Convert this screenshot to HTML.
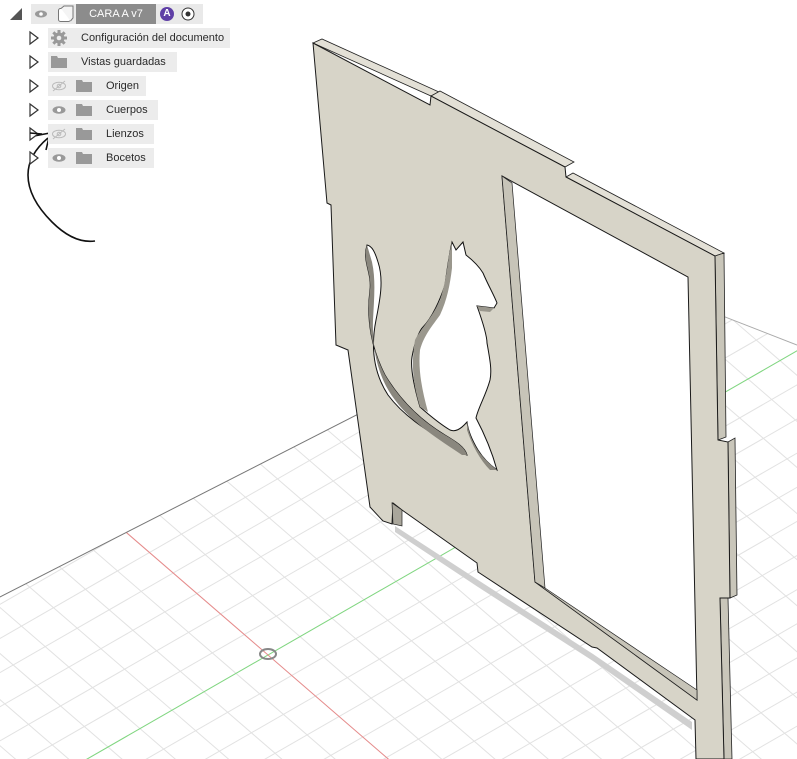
<!DOCTYPE html>
<html><head><meta charset="utf-8"><style>
html,body{margin:0;padding:0;width:797px;height:759px;overflow:hidden;background:#fff;font-family:"Liberation Sans",sans-serif}
svg{position:absolute;left:0;top:0}
.bg{position:absolute;background:#ececec;height:20px}
.t{position:absolute;font-size:11px;color:#2a2a2a;line-height:20px;white-space:nowrap}
</style></head><body>
<svg width="797" height="759" viewBox="0 0 797 759"><defs><clipPath id="cp"><polygon points="-10,602 625,278 797,345 797,759 -10,759"/></clipPath></defs><g id="g" clip-path="url(#cp)"></g>
<line x1="-10" y1="602" x2="625" y2="278" stroke="#777"/><line x1="625" y1="278" x2="797" y2="345" stroke="#aaa"/></svg>
<svg width="797" height="759" viewBox="0 0 797 759">
<!-- shadow -->
<polygon points="395,526 478,580 593,654 692,722 692,730 593,661 478,587 395,532" fill="#cfcfcf"/>
<!-- top thickness -->
<polygon points="313,43 322,39 439,92 431,96" fill="#e3e0d6" stroke="#222" stroke-width="0.8"/>
<polygon points="431,96 440,91 574,162 565,167" fill="#e3e0d6" stroke="#222" stroke-width="0.8"/>
<polygon points="566,177 573,173 724,253 715,256" fill="#e3e0d6" stroke="#222" stroke-width="0.8"/>
<!-- right thickness -->
<polygon points="715,256 724,253 726,437 718,440" fill="#c9c6ba" stroke="#222" stroke-width="0.8"/>
<polygon points="728,442 735,438 737,595 730,598" fill="#c9c6ba" stroke="#222" stroke-width="0.8"/>
<polygon points="720,598 728,598 732,759 724,759" fill="#c9c6ba" stroke="#222" stroke-width="0.8"/>
<!-- front face -->
<polygon points="313,43 430,105 431,96 565,167 566,177 715,256 718,440 728,442 730,598 720,598 724,759 696,759 695,720 597,648 592,647 478,572 477,563 402,510 393,503 392,524 383,521 370,507 348,350 336,345 331,205 327,203" fill="#d7d4c8" stroke="#1a1a1a" stroke-width="1"/>
<polygon points="392,503 402,510 402,526 393,524" fill="#a9a69b" stroke="#222" stroke-width="0.7"/>
<!-- window -->
<polygon points="502,176 688,277 697,700 535,582" fill="#fff" stroke="#1a1a1a" stroke-width="1"/>
<polygon points="502,176 512,183 545,588 535,582" fill="#c7c4b8" stroke="#222" stroke-width="0.7"/>
<polygon points="535,582 545,588 697,690 697,700" fill="#c7c4b8" stroke="#222" stroke-width="0.7"/>
<!-- cat tail -->
<path d="M367,245 C362,262 372,272 370,290 C366,320 372,350 385,375 C400,400 420,420 445,435 C455,441 465,447 467,455 C460,453 452,446 448,443 C430,432 405,418 388,395 C375,375 370,350 376,320 C380,300 384,280 378,262 C375,252 372,246 367,245 Z" fill="#fff" stroke="#111" stroke-width="1"/>
<path d="M367,245 C362,262 372,272 370,290 C366,320 372,350 385,375 C400,400 420,420 445,435 C455,441 465,447 467,455 L462,455 C440,440 412,423 395,400 C378,378 372,350 373,320 C374,300 376,280 372,262 Z" fill="#8a877e"/>
<!-- cat body -->
<path d="M452,242 L456,250 L463,242 L466,255 C475,262 480,268 483,273 C488,285 494,295 497,303 L494,308 L477,306 C482,320 487,335 487,343 C490,360 492,370 490,380 C486,395 478,408 476,418 C485,435 492,452 497,470 C490,465 483,458 478,450 C472,440 468,430 467,422 C460,430 455,432 450,430 C440,424 428,414 420,407 C415,390 410,370 412,357 C415,340 420,330 423,327 C432,318 440,300 445,285 C447,270 449,255 452,242 Z" fill="#fff" stroke="#111" stroke-width="1"/>
<path d="M452,242 L449,255 C447,270 445,285 440,300 C432,318 420,330 415,340 C410,370 415,390 420,407 L428,412 C422,390 418,370 420,350 C424,335 433,325 440,315 C447,300 450,285 452,268 Z" fill="#9a978d"/>
<path d="M467,422 C470,440 478,455 497,470 L490,470 C480,460 472,445 467,430 Z" fill="#8a877e"/>
<path d="M477,306 L494,308 L490,312 L480,311 Z" fill="#9a978d"/>
<!-- hand-drawn arrow -->
<path d="M95,241 C80,243 65,235 52,222 C38,208 28,192 28,175 C28,160 36,148 48,138" fill="none" stroke="#111" stroke-width="1.6"/>
<path d="M34,136 L50,133 L46,150" fill="none" stroke="#111" stroke-width="1.6"/>
<!-- origin -->
<ellipse cx="268" cy="654" rx="8" ry="5" fill="none" stroke="#888" stroke-width="2"/>
</svg>

<div class="bg" style="left:31px;top:4px;width:172px;background:#e9e9e9"></div>
<svg style="left:8px;top:7px" width="16" height="14"><polygon points="14,1 14,13 2,13" fill="#555"/></svg>
<svg style="left:34px;top:9px" width="14" height="10"><ellipse cx="7" cy="5" rx="6" ry="3.5" fill="#9a9a9a"/><circle cx="7" cy="5" r="1.8" fill="#fff"/></svg>
<svg style="left:57px;top:5px" width="18" height="18"><rect x="1.5" y="3.5" width="12" height="13" rx="2" fill="#fff" stroke="#777"/><path d="M4,3.5 L7,1 L16,1 L16,13 L13.5,16" fill="#f4f4f4" stroke="#777"/></svg>
<div style="position:absolute;left:76px;top:4px;width:80px;height:20px;background:#8c8c8c;color:#fff;font-size:11px;line-height:20px;text-align:center">CARA A v7</div>
<div style="position:absolute;left:160px;top:7px;width:14px;height:14px;border-radius:50%;background:#5f3fa6;color:#fff;font-size:10px;line-height:14px;text-align:center;font-weight:bold">A</div>
<svg style="left:181px;top:7px" width="14" height="14"><circle cx="7" cy="7" r="6" fill="#fff" stroke="#333"/><circle cx="7" cy="7" r="2.5" fill="#333"/></svg>

<div class="bg" style="left:48px;top:28px;width:182px"></div>
<div class="bg" style="left:48px;top:52px;width:129px"></div>
<div class="bg" style="left:48px;top:76px;width:98px"></div>
<div class="bg" style="left:48px;top:100px;width:110px"></div>
<div class="bg" style="left:48px;top:124px;width:106px"></div>
<div class="bg" style="left:48px;top:148px;width:106px"></div>

<svg style="left:28px;top:28px" width="14" height="150">
<g fill="#fff" stroke="#333" stroke-width="1.2">
<polygon points="2,4 10,10 2,16"/><polygon points="2,28 10,34 2,40"/><polygon points="2,52 10,58 2,64"/><polygon points="2,76 10,82 2,88"/><polygon points="2,100 10,106 2,112"/><polygon points="2,124 10,130 2,136"/></g></svg>

<svg style="left:51px;top:30px" width="16" height="16"><g fill="#999"><circle cx="8" cy="8" r="5.5"/><rect x="6.5" y="0" width="3" height="16"/><rect x="0" y="6.5" width="16" height="3"/><rect x="6.5" y="0" width="3" height="16" transform="rotate(45 8 8)"/><rect x="6.5" y="0" width="3" height="16" transform="rotate(-45 8 8)"/></g><circle cx="8" cy="8" r="2.3" fill="#ececec"/></svg>
<div class="t" style="left:81px;top:28px">Configuración del documento</div>
<svg style="left:51px;top:55px" width="16" height="14"><path d="M0,1 H6 L7,3 H16 V13 H0 Z" fill="#999"/></svg>
<div class="t" style="left:81px;top:52px">Vistas guardadas</div>

<svg style="left:51px;top:80px" width="16" height="12"><ellipse cx="8" cy="6" rx="6.5" ry="3.8" fill="none" stroke="#bbb"/><circle cx="8" cy="6" r="1.8" fill="none" stroke="#bbb"/><line x1="2" y1="11" x2="14" y2="1" stroke="#bbb"/></svg>
<svg style="left:76px;top:79px" width="16" height="14"><path d="M0,1 H6 L7,3 H16 V13 H0 Z" fill="#999"/></svg>
<div class="t" style="left:106px;top:76px">Origen</div>

<svg style="left:51px;top:104px" width="16" height="12"><ellipse cx="8" cy="6" rx="6.5" ry="3.8" fill="#999"/><circle cx="8" cy="6" r="2" fill="#fff"/></svg>
<svg style="left:76px;top:103px" width="16" height="14"><path d="M0,1 H6 L7,3 H16 V13 H0 Z" fill="#999"/></svg>
<div class="t" style="left:106px;top:100px">Cuerpos</div>

<svg style="left:51px;top:128px" width="16" height="12"><ellipse cx="8" cy="6" rx="6.5" ry="3.8" fill="none" stroke="#bbb"/><circle cx="8" cy="6" r="1.8" fill="none" stroke="#bbb"/><line x1="2" y1="11" x2="14" y2="1" stroke="#bbb"/></svg>
<svg style="left:76px;top:127px" width="16" height="14"><path d="M0,1 H6 L7,3 H16 V13 H0 Z" fill="#999"/></svg>
<div class="t" style="left:106px;top:124px">Lienzos</div>

<svg style="left:51px;top:152px" width="16" height="12"><ellipse cx="8" cy="6" rx="6.5" ry="3.8" fill="#999"/><circle cx="8" cy="6" r="2" fill="#fff"/></svg>
<svg style="left:76px;top:151px" width="16" height="14"><path d="M0,1 H6 L7,3 H16 V13 H0 Z" fill="#999"/></svg>
<div class="t" style="left:106px;top:148px">Bocetos</div>

<svg style="left:0;top:0;pointer-events:none" width="797" height="759"><path d="M30,133 L42,134" stroke="#111" stroke-width="1.4"/></svg>

<script>
(function(){
var s=document.getElementById('g'),h='';
var O=[268,655],g=[32,-18.4],r=[-23.7,-20.5];
function P(a,b){return [O[0]+a*g[0]+b*r[0],O[1]+a*g[1]+b*r[1]];}
function L(p,q,c,w){h+='<line x1="'+p[0].toFixed(1)+'" y1="'+p[1].toFixed(1)+'" x2="'+q[0].toFixed(1)+'" y2="'+q[1].toFixed(1)+'" stroke="'+c+'" stroke-width="'+w+'"/>';}
var A0=-25,A1=22,B0=-30,B1=12;
for(var b=B0;b<=B1;b++){L(P(A0,b),P(A1,b),'#e2e2e2',1);}
for(var a=A0;a<=A1;a++){L(P(a,B0),P(a,B1),'#e2e2e2',1);}
L(P(A0,0),P(A1,0),'#7fd87f',1);
L(P(0,B0),P(0,B1),'#e88a8a',1);
s.innerHTML=h;
})();
</script>
</body></html>
